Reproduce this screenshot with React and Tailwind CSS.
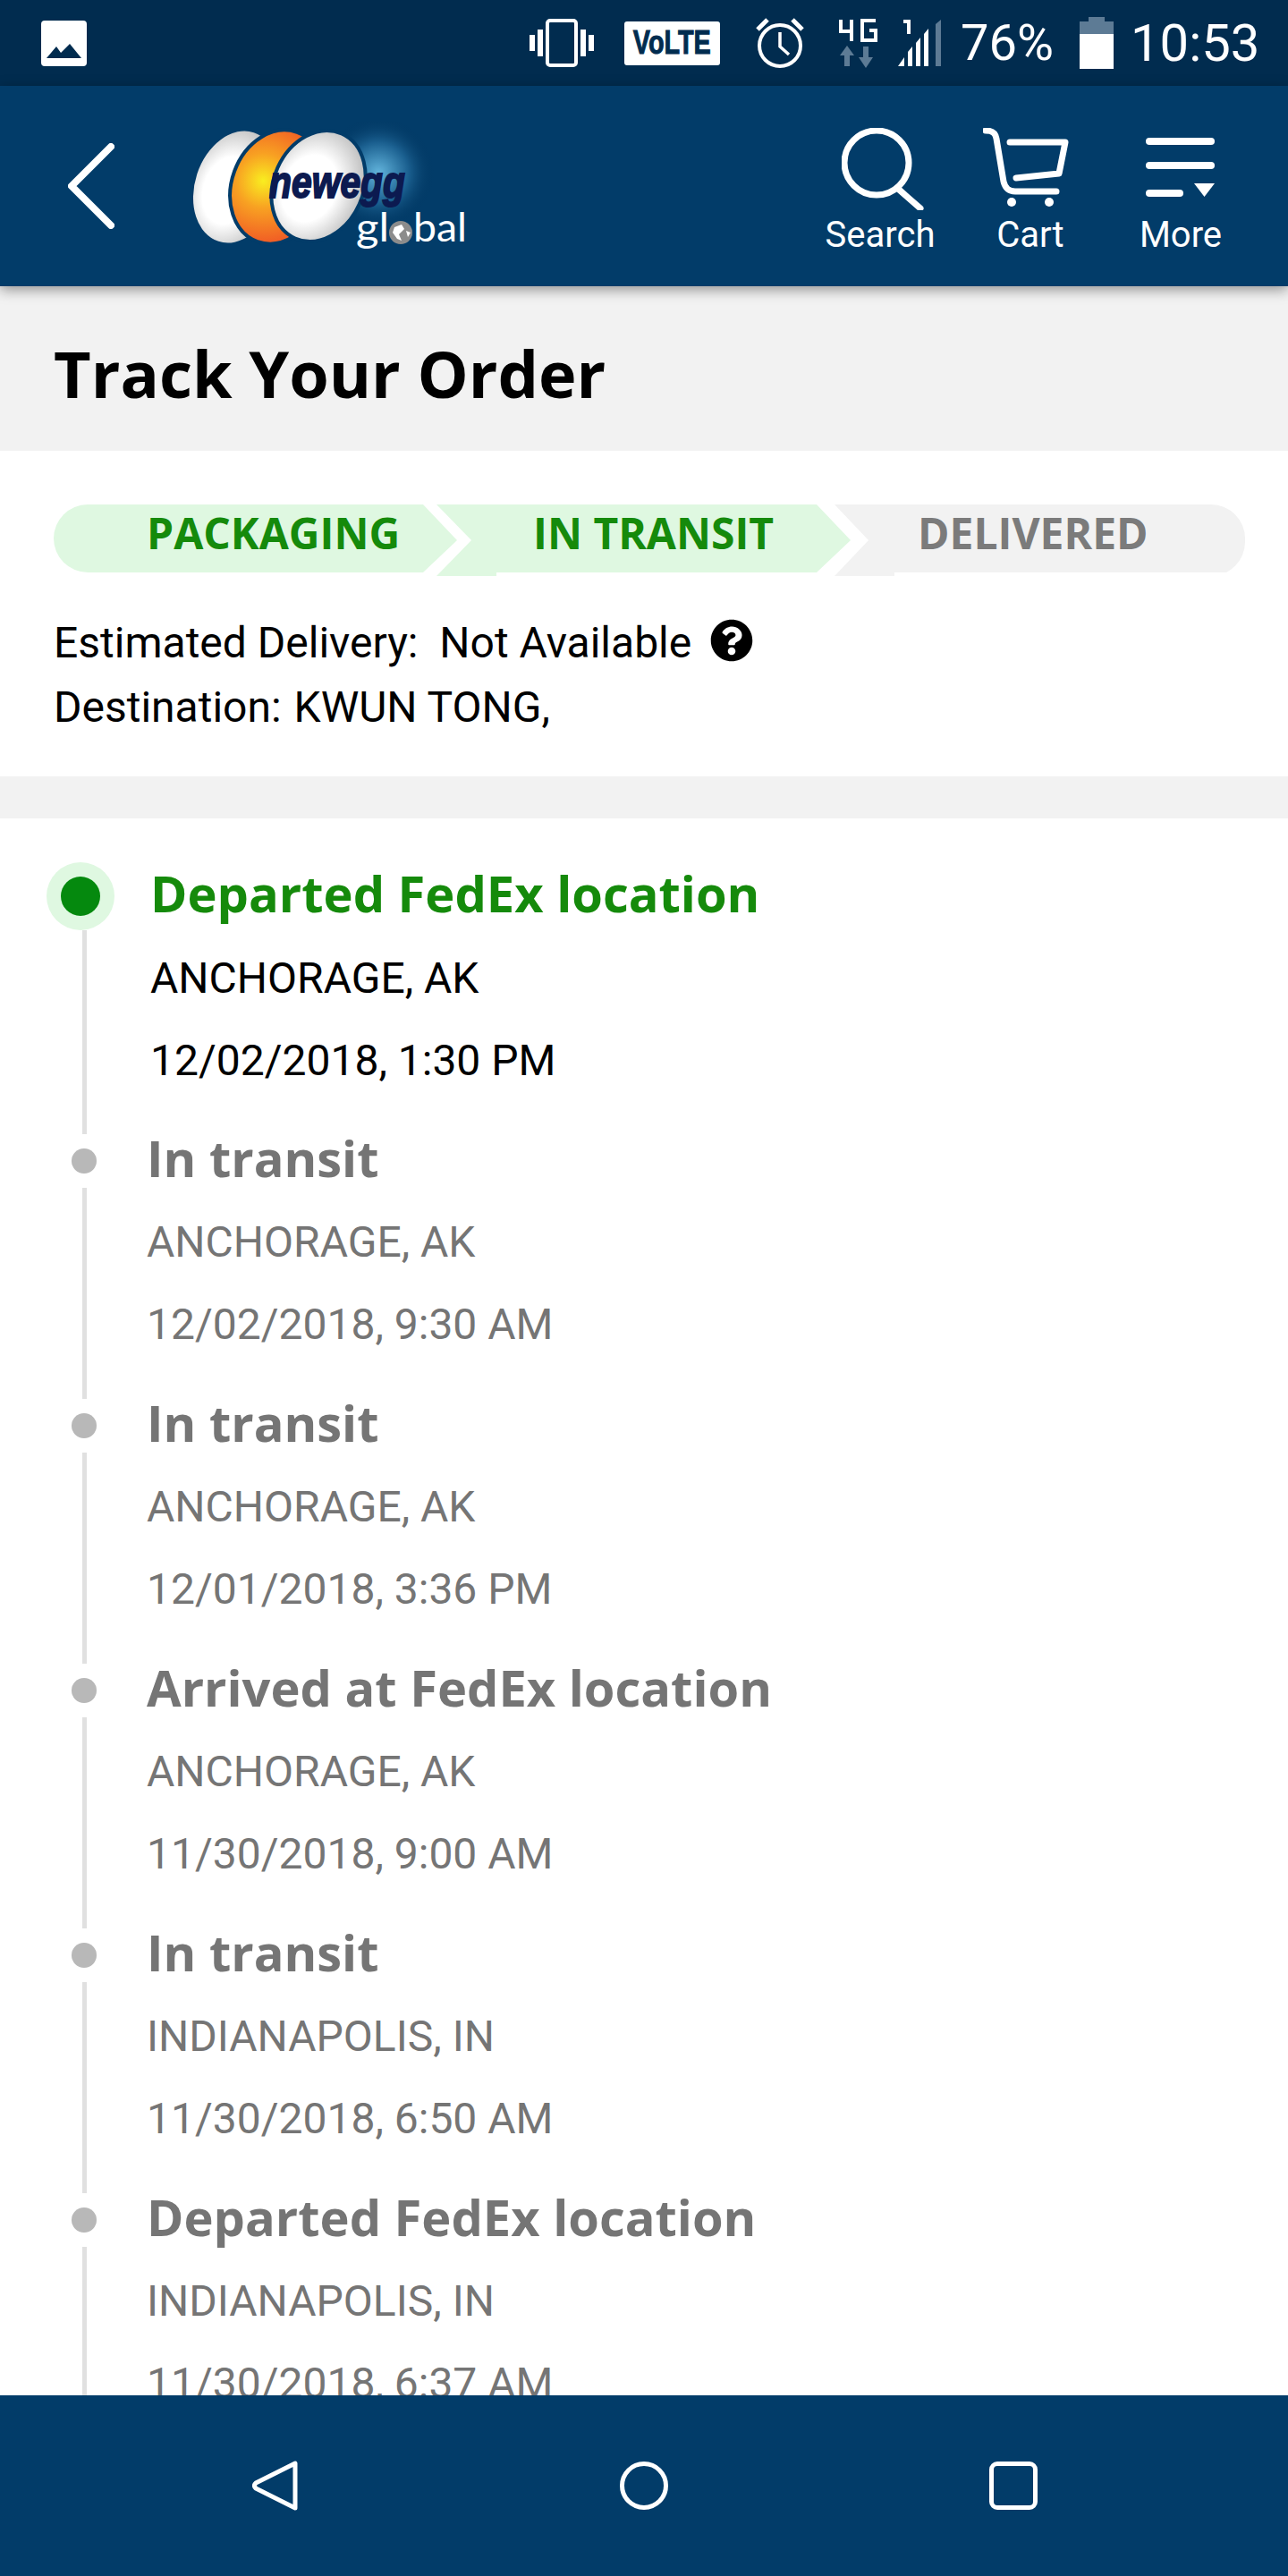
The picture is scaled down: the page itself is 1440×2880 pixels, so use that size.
import { FaQuestionCircle } from "react-icons/fa";

const events = [
  { title: "In transit", place: "ANCHORAGE, AK", time: "12/02/2018, 9:30 AM" },
  { title: "In transit", place: "ANCHORAGE, AK", time: "12/01/2018, 3:36 PM" },
  { title: "Arrived at FedEx location", place: "ANCHORAGE, AK", time: "11/30/2018, 9:00 AM" },
  { title: "In transit", place: "INDIANAPOLIS, IN", time: "11/30/2018, 6:50 AM" },
  { title: "Departed FedEx location", place: "INDIANAPOLIS, IN", time: "11/30/2018, 6:37 AM" },
];

const roboto = "font-['Roboto',sans-serif]";
const openSans = "font-['Open_Sans',sans-serif]";

const StatusBar = () => (
  <div className={`h-[96px] shrink-0 bg-[#012c4f] flex items-center text-white ${roboto}`}>
    <svg className="ml-[46px]" width="51" height="51" viewBox="0 0 51 51">
      <rect width="51" height="51" rx="4" fill="#fff" />
      <path d="M6 42 L17 29 L22 36 L32 26 L45 42 Z" fill="#012c4f" />
    </svg>
    <svg className="ml-[495px]" width="72" height="54" viewBox="0 0 72 54" fill="#fff">
      <rect x="0" y="18" width="6" height="18" />
      <rect x="9" y="12" width="6" height="30" />
      <rect x="57" y="12" width="6" height="30" />
      <rect x="66" y="18" width="6" height="18" />
      <rect x="20" y="2" width="32" height="50" rx="3" fill="none" stroke="#fff" strokeWidth="4" />
    </svg>
    <div className="ml-[34px] w-[107px] h-[49px] rounded-[3px] bg-white text-[#012c4f] flex items-center justify-center overflow-hidden">
      <span className="inline-block scale-x-[0.8] font-['Liberation_Sans',sans-serif] font-bold text-[36px] leading-none [-webkit-text-stroke:1px_#012c4f]">
        VoLTE
      </span>
    </div>
    <svg className="ml-[39px]" width="56" height="58" viewBox="0 0 56 58" fill="none" stroke="#fff">
      <circle cx="28" cy="32" r="23" strokeWidth="4" />
      <path d="M28 17 V33 L38 42" strokeWidth="3.5" />
      <path d="M3 14 L14 3 M53 14 L42 3" strokeWidth="5" />
    </svg>
    <svg className="ml-[37px]" width="44" height="56" viewBox="0 0 44 56" fill="none">
      <path d="M3 2 V15 H16 M15 2 V26" stroke="#fff" strokeWidth="4" />
      <path d="M42 3 H27 V25 H42 V14 H35" stroke="#fff" strokeWidth="4" />
      <path d="M10 31 L2 42 H7 V54 H13 V42 H18 Z M28 32 V44 H23 L31 56 L39 44 H34 V32 Z" fill="#5d7b95" />
    </svg>
    <svg className="ml-[23px]" width="48" height="52" viewBox="0 0 48 52" fill="#fff">
      <path d="M6 0 H14 V16 H10 V4 H6 Z" />
      <path d="M0 52 L7 42 V52 Z M11 52 V36 L16 30 V52 Z M20 52 V26 L25 20 V52 Z M29 52 V16 L34 10 V52 Z" />
      <path d="M42 52 V5 L48 0 V52 Z" fill="#5d7b95" />
    </svg>
    <span className="ml-[22px] text-[56px] leading-none">76%</span>
    <svg className="ml-[29px]" width="38" height="58" viewBox="0 0 38 58">
      <path d="M10 0 H28 V5 H38 V19 H0 V5 H10 Z" fill="#5d7b95" />
      <rect y="19" width="38" height="39" fill="#fff" />
    </svg>
    <span className="ml-[19px] text-[58px] leading-none">10:53</span>
  </div>
);

const NewEggLogo = () => (
  <svg className="ml-[82px] mt-[9px]" width="320" height="155" viewBox="210 135 320 155">
    <defs>
      <radialGradient id="glow" cx="423" cy="193" r="62" gradientUnits="userSpaceOnUse">
        <stop offset="0" stopColor="#62b4dc" />
        <stop offset="0.55" stopColor="#1a5f8f" />
        <stop offset="1" stopColor="#01355f" stopOpacity="0" />
      </radialGradient>
      <radialGradient id="egg" cx="0.42" cy="0.55" r="0.6">
        <stop offset="0.5" stopColor="#ffffff" />
        <stop offset="1" stopColor="#bdbdbd" />
      </radialGradient>
      <radialGradient id="sun" cx="293" cy="208" r="68" gradientUnits="userSpaceOnUse">
        <stop offset="0" stopColor="#f9ee20" />
        <stop offset="0.45" stopColor="#f8a122" />
        <stop offset="1" stopColor="#f15f25" />
      </radialGradient>
    </defs>
    <circle cx="423" cy="200" r="72" fill="url(#glow)" />
    <ellipse cx="264" cy="209" rx="46" ry="64" transform="rotate(18 264 209)" fill="url(#egg)" />
    <ellipse cx="310" cy="209" rx="51" ry="65" transform="rotate(20 310 209)" fill="url(#sun)" stroke="#023c69" strokeWidth="4" />
    <ellipse cx="356" cy="208" rx="50" ry="64" transform="rotate(24 356 208)" fill="url(#egg)" stroke="#023c69" strokeWidth="4" />
    <text
      x="301"
      y="221"
      textLength="152"
      lengthAdjust="spacingAndGlyphs"
      fontFamily="Liberation Sans, sans-serif"
      fontWeight="700"
      fontStyle="italic"
      fontSize="50"
      fill="#0c1a50"
      stroke="#0c1a50"
      strokeWidth="2"
    >
      newegg
    </text>
    <text x="398" y="270" textLength="37" lengthAdjust="spacingAndGlyphs" fontFamily="Lato, sans-serif" fontWeight="400" fontSize="44" fill="#fff">gl</text>
    <circle cx="448" cy="260" r="13" fill="#8c8c8c" />
    <path d="M441 254 L449 251 L452 256 L446 262 L449 269 L444 267 L439 260 Z M454 258 L459 260 L456 265 Z" fill="#fff" />
    <text x="462" y="270" textLength="60" lengthAdjust="spacingAndGlyphs" fontFamily="Lato, sans-serif" fontWeight="400" fontSize="44" fill="#fff">bal</text>
  </svg>
);

const NavAction = ({ label, children }) => (
  <div className="w-[168px] flex flex-col items-center">
    <div className="h-[100px] flex items-center justify-center">{children}</div>
    <span className={`text-[40px] leading-[48px] text-white ${roboto}`}>{label}</span>
  </div>
);

const Header = () => (
  <div className="relative z-10 h-[224px] shrink-0 bg-[#023c69] flex items-center shadow-[0_4px_14px_rgba(0,0,0,0.4)]">
    <svg className="ml-[76px]" width="52" height="96" viewBox="0 0 52 96" fill="none" stroke="#fff" strokeWidth="8" strokeLinecap="round" strokeLinejoin="round">
      <path d="M48 4 L4 48 L48 92" />
    </svg>
    <NewEggLogo />
    <div className="ml-auto mr-[36px] flex pt-[10px]">
      <NavAction label="Search">
        <svg className="ml-[6px]" width="92" height="92" viewBox="0 0 92 92" fill="none" stroke="#fff" strokeWidth="7" strokeLinecap="round">
          <circle cx="39" cy="39" r="36" />
          <path d="M63 68 L88 90" />
        </svg>
      </NavAction>
      <NavAction label="Cart">
        <svg className="mr-[10px]" width="96" height="92" viewBox="1099 136 96 92" fill="none" stroke="#fff" strokeWidth="7" strokeLinecap="round" strokeLinejoin="round">
          <path d="M1102 139 C1110 139 1113 142 1114 148 L1122 196 C1124 204 1128 207 1135 207 H1181" />
          <path d="M1129 152 H1191 L1184 187 L1136 192" />
          <circle cx="1131" cy="219" r="5" fill="#fff" stroke="none" />
          <circle cx="1173" cy="219" r="5" fill="#fff" stroke="none" />
        </svg>
      </NavAction>
      <NavAction label="More">
        <svg width="78" height="70" viewBox="0 0 78 70" fill="#fff">
          <rect x="0" y="0" width="77" height="8" rx="4" />
          <rect x="0" y="27" width="77" height="8" rx="4" />
          <rect x="0" y="58" width="42" height="8" rx="4" />
          <path d="M54 51 H77 L65.500 66 Z" />
        </svg>
      </NavAction>
    </div>
  </div>
);

const Stepper = () => (
  <div className={`flex w-[1332px] h-[80px] font-bold text-[48px] leading-[64px] ${openSans}`}>
    <div className="shrink-0 w-[451px] h-[76px] rounded-l-[38px] bg-[#dff8e1] text-[#158a0b] [clip-path:polygon(0_0,413px_0,451px_40px,413px_76px,0_76px)] pl-[104px]">
      PACKAGING
    </div>
    <div className="shrink-0 w-[463px] h-[80px] -ml-[23px] bg-[#dff8e1] text-[#158a0b] [clip-path:polygon(0_0,425px_0,463px_40px,425px_76px,67px_76px,67px_80px,0_80px,39px_40px)] pl-[108px]">
      IN TRANSIT
    </div>
    <div className="shrink-0 w-[459px] h-[80px] -ml-[18px] text-[#7b7b7b] relative pl-[93px]">
      <div className="absolute inset-0 -z-10 bg-[#f2f2f2] rounded-r-[38px] [clip-path:polygon(0_0,100%_0,100%_76px,67px_76px,67px_80px,0_80px,38px_40px)]" />
      DELIVERED
    </div>
  </div>
);

const CurrentEvent = () => (
  <div className="h-[304px] flex">
    <div className="ml-[52px] w-[76px] flex flex-col shrink-0">
      <div className="w-[76px] h-[76px] rounded-full bg-[#dff8e1] flex items-center justify-center shrink-0">
        <div className="w-[44px] h-[44px] rounded-full bg-[#05890e]" />
      </div>
      <div className="ml-[40px] w-[5px] flex-1 bg-[#e0e0e0]" />
    </div>
    <div className="ml-[40px] pt-[4px]">
      <div className={`text-[56px] leading-[60px] font-bold text-[#158a0b] ${openSans}`}>Departed FedEx location</div>
      <div className={`mt-[20px] text-[48px] leading-[92px] text-black ${roboto}`}>ANCHORAGE, AK</div>
      <div className={`text-[48px] leading-[92px] text-black ${roboto}`}>12/02/2018, 1:30 PM</div>
    </div>
  </div>
);

const PastEvent = ({ title, place, time }) => (
  <div className="h-[296px] flex">
    <div className="ml-[64px] w-[60px] flex flex-col items-center shrink-0">
      <div className="h-[60px] flex items-center shrink-0">
        <div className="w-[28px] h-[28px] rounded-full bg-[#b8b8b8]" />
      </div>
      <div className="w-[5px] flex-1 bg-[#e0e0e0]" />
    </div>
    <div className="ml-[40px] -mt-[4px]">
      <div className={`text-[56px] leading-[60px] font-bold text-[#757575] ${openSans}`}>{title}</div>
      <div className={`mt-[19px] text-[48px] leading-[92px] text-[#757575] ${roboto}`}>{place}</div>
      <div className={`text-[48px] leading-[92px] text-[#757575] ${roboto}`}>{time}</div>
    </div>
  </div>
);

const BottomNav = () => (
  <div className="h-[202px] shrink-0 bg-[#023c69] relative z-10 flex items-center">
    <svg className="ml-[282px]" width="52" height="56" viewBox="0 0 52 56" fill="none" stroke="#fff" strokeWidth="5" strokeLinejoin="round">
      <path d="M48 3 V53 L4 31 Q1 28 4 25 Z" />
    </svg>
    <div className="ml-[359px] w-[54px] h-[54px] rounded-full border-[5px] border-white" />
    <div className="ml-[359px] w-[54px] h-[54px] rounded-[9px] border-[5px] border-white" />
  </div>
);

export default function App() {
  return (
    <div className="w-[1440px] h-[2880px] flex flex-col overflow-hidden bg-white">
      <StatusBar />
      <Header />
      <div className="h-[184px] shrink-0 bg-[#f2f2f2] flex items-center pl-[60px]">
        <h1 className={`text-[72px] font-bold text-black leading-none pt-[9px] ${openSans}`}>Track Your Order</h1>
      </div>
      <div className="h-[364px] shrink-0 bg-white pt-[60px] px-[60px] relative z-0">
        <Stepper />
        <div className={`mt-[39px] text-[48px] leading-[72px] text-black ${roboto}`}>
          <div className="flex items-center whitespace-pre">
            Estimated Delivery:  Not Available
            <FaQuestionCircle className="ml-[21px] -mt-[6px]" size={48} color="#000" />
          </div>
          <div>
            Destination:<span className="ml-[2px]"> KWUN TONG,</span>
          </div>
        </div>
      </div>
      <div className="h-[47px] shrink-0 bg-[#f2f2f2]" />
      <div className="flex-1 min-h-0 overflow-hidden bg-white pt-[49px]">
        <CurrentEvent />
        {events.map((e, i) => (
          <PastEvent key={i} {...e} />
        ))}
      </div>
      <BottomNav />
    </div>
  );
}
